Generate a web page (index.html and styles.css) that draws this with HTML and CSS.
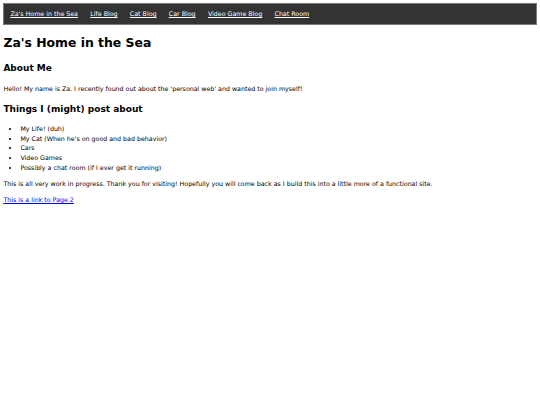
FILE: index.html
```html
<!DOCTYPE html>
<html>
<head>
<meta charset="utf-8">
<title>Za's Home in the Sea</title>
<link rel="stylesheet" href="styles.css">
</head>
<body>
<nav class="topnav">
  <a href="#">Za's Home in the Sea</a>
  <a href="#">Life Blog</a>
  <a href="#">Cat Blog</a>
  <a href="#">Car Blog</a>
  <a href="#">Video Game Blog</a>
  <a href="#">Chat Room</a>
</nav>
<h1 class="title">Za's Home in the Sea</h1>
<h2 class="section">About Me</h2>
<p class="text">Hello! My name is Za. I recently found out about the 'personal web' and wanted to join myself!</p>
<h2 class="section">Things I (might) post about</h2>
<ul class="list">
  <li>My Life! (duh)</li>
  <li>My Cat (When he's on good and bad behavior)</li>
  <li>Cars</li>
  <li>Video Games</li>
  <li>Possibly a chat room (if I ever get it running)</li>
</ul>
<p class="text">This is all very work in progress. Thank you for visiting! Hopefully you will come back as I build this into a little more of a functional site.</p>
<p class="text"><a class="link" href="#">This is a link to Page 2</a></p>
</body>
</html>
```
FILE: styles.css
```css
html, body {
  background: #ffffff;
}
body {
  margin: 3.4px;
  font-family: "Comic Sans MS", "DejaVu Sans", sans-serif;
  font-size: 6.3px;
  line-height: 9.4px;
  color: #000;
}
.topnav {
  display: flex;
  gap: 12.3px;
  background: #333333;
  border: 1px solid #7a7a7a;
  padding: 5.7px 6px;
  line-height: 7.8px;
  margin-bottom: 1.5px;
}
.topnav a {
  color: #ffffff;
  text-decoration: underline;
}
.title {
  font-size: 12.4px;
  line-height: 18.75px;
  margin: 9px 0;
}
.section {
  font-size: 9px;
  line-height: 14px;
  margin: 8.4px 0;
}
.text {
  margin: 6.75px 0;
}
.list {
  margin: 6.75px 0;
  padding-left: 17px;
}
.list li {
  line-height: 9.7px;
}
.link {
  color: #0000ee;
}
```
